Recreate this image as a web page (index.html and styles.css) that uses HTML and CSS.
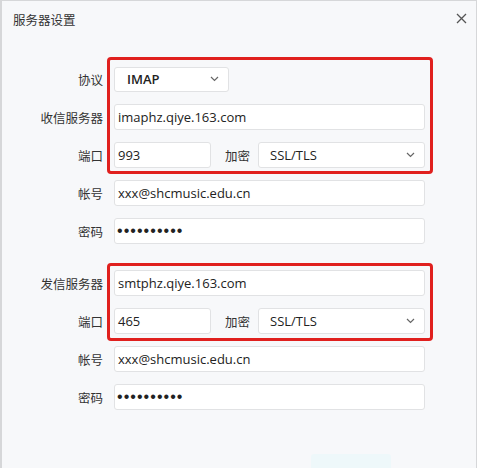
FILE: index.html
```html
<!DOCTYPE html>
<html lang="zh-CN">
<head>
<meta charset="utf-8">
<title>服务器设置</title>
<link rel="stylesheet" href="styles.css">
</head>
<body>
<div class="dialog">
  <div class="header">
    <span class="title">服务器设置</span>
    <span class="close" aria-label="关闭">
      <svg width="11" height="11" viewBox="0 0 11 11"><path d="M1 1L10 10M10 1L1 10" stroke="#555" stroke-width="1.3" fill="none"/></svg>
    </span>
  </div>
  <div class="form">
    <div class="section">
      <div class="row">
        <label class="label">协议</label>
        <div class="select select-proto"><span class="val strong">IMAP</span><svg class="chev" width="9" height="6" viewBox="0 0 9 6"><path d="M1 1L4.5 4.5L8 1" stroke="#666" stroke-width="1.2" fill="none"/></svg></div>
      </div>
      <div class="row">
        <label class="label">收信服务器</label>
        <div class="input">imaphz.qiye.163.com</div>
      </div>
      <div class="row">
        <label class="label">端口</label>
        <div class="port-line">
          <div class="input port">993</div>
          <span class="label inline">加密</span>
          <div class="select select-enc"><span class="val">SSL/TLS</span><svg class="chev" width="9" height="6" viewBox="0 0 9 6"><path d="M1 1L4.5 4.5L8 1" stroke="#666" stroke-width="1.2" fill="none"/></svg></div>
        </div>
      </div>
      <div class="row">
        <label class="label">帐号</label>
        <div class="input">xxx@shcmusic.edu.cn</div>
      </div>
      <div class="row">
        <label class="label">密码</label>
        <div class="input dots">••••••••••</div>
      </div>
    </div>
    <div class="section section-out">
      <div class="row">
        <label class="label">发信服务器</label>
        <div class="input">smtphz.qiye.163.com</div>
      </div>
      <div class="row">
        <label class="label">端口</label>
        <div class="port-line">
          <div class="input port">465</div>
          <span class="label inline">加密</span>
          <div class="select select-enc"><span class="val">SSL/TLS</span><svg class="chev" width="9" height="6" viewBox="0 0 9 6"><path d="M1 1L4.5 4.5L8 1" stroke="#666" stroke-width="1.2" fill="none"/></svg></div>
        </div>
      </div>
      <div class="row">
        <label class="label">帐号</label>
        <div class="input">xxx@shcmusic.edu.cn</div>
      </div>
      <div class="row">
        <label class="label">密码</label>
        <div class="input dots">••••••••••</div>
      </div>
    </div>
    <div class="mark mark-in"></div>
    <div class="mark mark-out"></div>
  </div>
  <div class="footer"><span class="btn"></span></div>
</div>
</body>
</html>
```
FILE: styles.css
```css
html, body {
  margin: 0;
  padding: 0;
  background: #ffffff;
}
body {
  width: 480px;
  height: 468px;
  overflow: hidden;
  font-family: "Open Sans", "Noto Sans CJK SC", sans-serif;
  color: #222;
}
.dialog {
  width: 474px;
  height: 480px;
  background: #f7f8fa;
  border: 1px solid #d6d7d9;
  border-bottom: none;
  border-left-width: 2px;
  box-sizing: content-box;
}
.header {
  height: 38px;
  display: flex;
  align-items: center;
  justify-content: space-between;
  padding: 0 6px 0 11px;
}
.title {
  font-family: "Noto Sans CJK SC", sans-serif;
  font-size: 12.5px;
  color: #333;
  margin-top: -1px;
}
.close {
  display: flex;
  width: 16px;
  height: 16px;
  align-items: center;
  justify-content: center;
  margin-top: -4px;
  margin-right: 1px;
}
.form {
  position: relative;
  padding-top: 27px;
}
.section {
  display: flex;
  flex-direction: column;
  gap: 12px;
}
.section-out {
  margin-top: 26px;
}
.row {
  display: flex;
  align-items: center;
  height: 26px;
}
.label {
  width: 101px;
  text-align: right;
  font-family: "Noto Sans CJK SC", sans-serif;
  font-size: 12.5px;
  color: #333;
  flex: none;
  margin-right: 11px;
}
.label.inline {
  width: auto;
  margin: 0 8px 0 14px;
}
.input, .select {
  height: 26px;
  box-sizing: border-box;
  background: #fff;
  border: 1px solid #e1e2e4;
  border-radius: 3px;
  font-size: 13px;
  color: #222;
  display: flex;
  align-items: center;
}
.input {
  width: 311px;
  padding-left: 3px;
}
.select {
  justify-content: space-between;
  padding: 0 9px 0 11px;
}
.select-proto {
  width: 115px;
  height: 25px;
}
.select-proto .val {
  padding-left: 1px;
}
.strong {
  font-weight: 600;
}
.port-line {
  display: flex;
  align-items: center;
  width: 311px;
}
.input.port {
  width: 97px;
}
.select-enc {
  flex: 1;
}
.chev {
  display: block;
}
.dots {
  font-family: "Liberation Sans", sans-serif;
  font-size: 16px;
  letter-spacing: 1.05px;
  color: #222;
  padding-left: 2px;
}
.mark {
  position: absolute;
  left: 105px;
  width: 326px;
  border: 3px solid #e0201e;
  border-radius: 4px;
  box-sizing: border-box;
  pointer-events: none;
}
.mark-in {
  top: 18px;
  height: 117px;
}
.mark-out {
  top: 224px;
  height: 78px;
}
.footer {
  display: flex;
  padding: 44px 0 0 309px;
}
.btn {
  width: 80px;
  height: 20px;
  background: #eef8fa;
  border-radius: 3px;
}
```
